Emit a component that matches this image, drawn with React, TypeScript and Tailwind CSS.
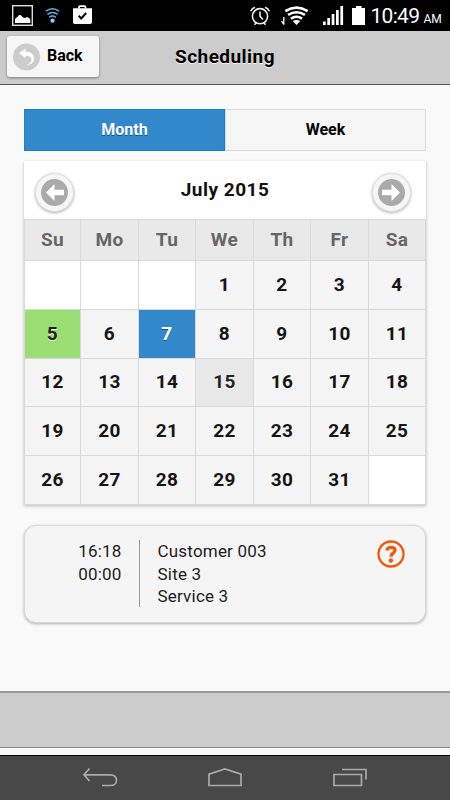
import React from "react";
import clsx from "clsx";

const weekdays = ["Su", "Mo", "Tu", "We", "Th", "Fr", "Sa"];
const LEADING_BLANKS = 3;
const DAYS_IN_MONTH = 31;
const cells = Array.from({ length: 35 }, (_, i) => {
  const day = i - LEADING_BLANKS + 1;
  return day > 0 && day <= DAYS_IN_MONTH ? day : null;
});

const StatusBar = () => (
  <div className="flex h-[31px] items-center justify-between bg-black pl-3 pr-[8px] text-white">
    <svg width="82" height="31" viewBox="12 0 82 31">
      <rect x="12.7" y="5.7" width="19.6" height="19.6" fill="none" stroke="#ddd" strokeWidth="1.4" />
      <path d="M15 23v-4l1.500-1.500 1-.5 1.500-2h1.500l2.500 2.500 2 .5 2-1 2 1 1.300 1.500V23z" fill="#fff" />
      <g fill="none" stroke="#5cb3e4" strokeWidth="1.5">
        <path d="M46 11.2q6.5-4.800 13 0" />
        <path d="M47.4 14.3q5.100-3.800 10.200 0" />
        <path d="M49.2 17.3q3.300-2.400 6.600 0" />
      </g>
      <circle cx="52.5" cy="20.7" r="2.100" fill="#8fd0f5" />
      <path d="M79 8.500V7.200q0-1 1-1h4.500q1 0 1 1v1.300" fill="none" stroke="#fff" strokeWidth="1.800" />
      <path d="M73 8.300h19v14q0 1.700-1.700 1.700H74.700q-1.700 0-1.700-1.700z" fill="#fff" />
      <path d="M78.700 15.800l2.500 2.700 5-5.500" fill="none" stroke="#000" strokeWidth="2" />
    </svg>
    <div className="flex items-center">
      <svg width="118" height="31" viewBox="250 0 118 31">
        <g fill="none" stroke="#eee" strokeWidth="1.600">
          <circle cx="260" cy="16.200" r="7.600" />
          <path d="M260 11.500V16.200l3 3.300M250.600 11.300q1.200-2.800 4.400-4M269.400 11.300q-1.200-2.800-4.400-4" />
          <path d="M256 23l-1.500 1.700M264 23l1.500 1.700" />
        </g>
        <path d="M283.800 17v7.800M281.500 21.200l2.300 3.300" stroke="#fff" strokeWidth="1.300" fill="none" />
        <path d="M296.500 25l-3.800-3.900q3.800-2.400 7.600 0z" fill="#fff" />
        <g fill="none" stroke="#fff" strokeWidth="2.600">
          <path d="M285.300 11.100q11.200-6.900 22.400 0" />
          <path d="M288.100 14.900q8.400-5.400 16.800 0" />
          <path d="M290.900 18.600q5.600-3.600 11.200 0" />
        </g>
        <path d="M323 21.500h2.700V25H323zM327.300 18h2.700v7h-2.700zM331.700 14h2.700v11h-2.700zM336 10h2.700v15H336zM340.400 6h2.700v19h-2.700z" fill="#fff" />
        <path d="M352 8h4V6h5.500v2h3.500v17h-13z" fill="#fff" />
      </svg>
      <span className="ml-[2.500px] flex items-baseline pt-[1px] leading-none">
        <span className="w-[53px] text-[21px] tracking-[-0.7px]">10:49</span>
        <span className="w-[18.500px] text-[12px]">AM</span>
      </span>
    </div>
  </div>
);

const Header = () => (
  <header className="flex h-[54px] border-b border-[#555] bg-[#ccc] pl-[7px] pt-[5px] [text-shadow:0_1px_0_#f3f3f3]">
    <button className="flex h-[41px] w-[92px] items-center rounded-[3px] bg-[#f6f6f6] pl-[6px] text-[16px] font-bold shadow-[0_1px_3px_rgba(0,0,0,0.4)]">
      <svg width="27" height="28" viewBox="0 0 27 28">
        <circle cx="13.500" cy="14" r="13.500" fill="#ccc" />
        <path d="M6 10.200l6.500-4.500v2.900c5.500.2 8.700 3.200 8.700 7 0 4.200-3.400 6.400-8.200 6.600 4-1.500 5.500-3.300 5.500-5.500 0-2.400-2-4-6-4.200V15z" fill="#fff" />
      </svg>
      <span className="-mt-[2px] ml-[7px]">Back</span>
    </button>
    <h1 className="mr-[99px] mt-[10px] flex-1 text-center text-[19px] font-bold leading-[22px] tracking-[0.45px]">
      Scheduling
    </h1>
  </header>
);

const ArrowButton = ({ direction }: { direction: "left" | "right" }) => (
  <button className="flex size-[39px] items-center justify-center rounded-full border border-[#ddd] bg-[#f6f6f6] shadow-[0_1px_3px_rgba(0,0,0,0.3)]">
    <svg
      width="27"
      height="27"
      viewBox="0 0 27 27"
      className={clsx(direction === "right" && "rotate-180")}
    >
      <circle cx="13.500" cy="13.500" r="13.500" fill="#aaa" />
      <path d="M5 13.500L13.500 5v5.800H23v5.500h-9.500V22z" fill="#fff" />
    </svg>
  </button>
);

const dayStyle = (day: number | null) => {
  if (day === null) return "bg-white";
  if (day === 5) return "bg-[#9ade74] text-[#222] [text-shadow:0_1px_0_#f3f3f3]";
  if (day === 7) return "bg-[#3388cc] text-white [text-shadow:0_1px_0_#005599]";
  if (day === 15) return "bg-[#e8e8e8] text-[#222] [text-shadow:0_1px_0_#fff]";
  return "bg-[#f5f5f5] text-[#151515] [text-shadow:0_1px_0_#f3f3f3]";
};

const Calendar = () => (
  <section className="mt-[10px] bg-white shadow-[0_1px_3px_rgba(0,0,0,0.25)]">
    <div className="flex h-[58px] items-center justify-between pl-[11px] pr-[15px] pt-[5px]">
      <ArrowButton direction="left" />
      <h2 className="-mt-[4px] ml-[4px] text-[19px] font-bold tracking-[0.5px] text-[#111]">July 2015</h2>
      <ArrowButton direction="right" />
    </div>
    <div className="grid grid-cols-[56px_58px_57px_58px_57px_58px_58px] grid-rows-[41px_49px_49px_48px_49px_50px] text-[19px] font-bold tracking-[0.4px]">
      {weekdays.map((name, i) => (
        <div
          key={name}
          className={clsx(
            "flex items-center justify-center border-l border-t border-[#d9d9d9] bg-[#e9e9e9] text-[#666]",
            i === 6 && "border-r"
          )}
        >
          {name}
        </div>
      ))}
      {cells.map((day, i) => (
        <div
          key={i}
          className={clsx(
            "flex items-center justify-center border-l border-t border-[#d9d9d9]",
            i % 7 === 6 && "border-r",
            i >= 28 && "border-b",
            dayStyle(day)
          )}
        >
          {day}
        </div>
      ))}
    </div>
  </section>
);

const Appointment = () => (
  <section className="mt-[20px] flex h-[98px] rounded-[12px] border border-[#d9d9d9] bg-[#f5f5f5] pt-[14px] text-[17px] leading-[22.500px] tracking-[0.2px] text-[#1c1c1c] shadow-[0_1px_3px_rgba(0,0,0,0.3)]">
    <div className="w-[96.500px] text-right">
      <p>16:18</p>
      <p>00:00</p>
    </div>
    <div className="ml-[17.500px] h-[67px] w-px bg-[#999]" />
    <div className="ml-[17.500px] flex-1">
      <p>Customer 003</p>
      <p>Site 3</p>
      <p>Service 3</p>
    </div>
    <svg width="28" height="28" viewBox="0 0 28 28" className="mr-[20px]">
      <circle cx="14" cy="14" r="12.500" fill="none" stroke="#f4570b" strokeWidth="2.300" />
      <path d="M9.800 10.600c.4-2.600 2-3.300 4.200-3.300 2.500 0 4 1.200 4 3 0 2.900-4.100 2.900-4.100 6.400" fill="none" stroke="#f4570b" strokeWidth="3.300" />
      <circle cx="13.900" cy="20.500" r="2.200" fill="#f4570b" />
    </svg>
  </section>
);

const NavigationBar = () => (
  <nav className="h-[45px] border-t border-black bg-[#484849]">
    <svg width="450" height="44" viewBox="0 756 450 44" fill="none" stroke="#aaa" strokeWidth="1.700">
      <path d="M89.500 768.500l-5.500 6.300 5.500 6.200M84 774.800h26.500c8 0 8 10.700 0 10.700H102" />
      <path d="M209 785.500v-11.300l16-5.200 16 5.200v11.300z" />
      <path d="M334 774.500h27.500v11H334zM342 769.500h24v10" />
    </svg>
  </nav>
);

export default function App() {
  return (
    <div className="flex h-[800px] w-[450px] flex-col overflow-hidden bg-[#f9f9f9] font-[Roboto,sans-serif] text-black">
      <StatusBar />
      <Header />
      <main className="flex-1 px-[24px] pt-[24px]">
        <div className="grid h-[42px] grid-cols-2 text-[16px] font-bold">
          <button className="border border-[#1b80c8] bg-[#3388cc] text-white [text-shadow:0_1px_0_#005599]">
            Month
          </button>
          <button className="border border-[#d9d9d9] bg-[#f6f6f6]">Week</button>
        </div>
        <Calendar />
        <Appointment />
      </main>
      <footer className="mb-[7px] h-[57px] border-b border-t-2 border-b-[#888] border-t-[#999] bg-[#ccc]" />
      <NavigationBar />
    </div>
  );
}
